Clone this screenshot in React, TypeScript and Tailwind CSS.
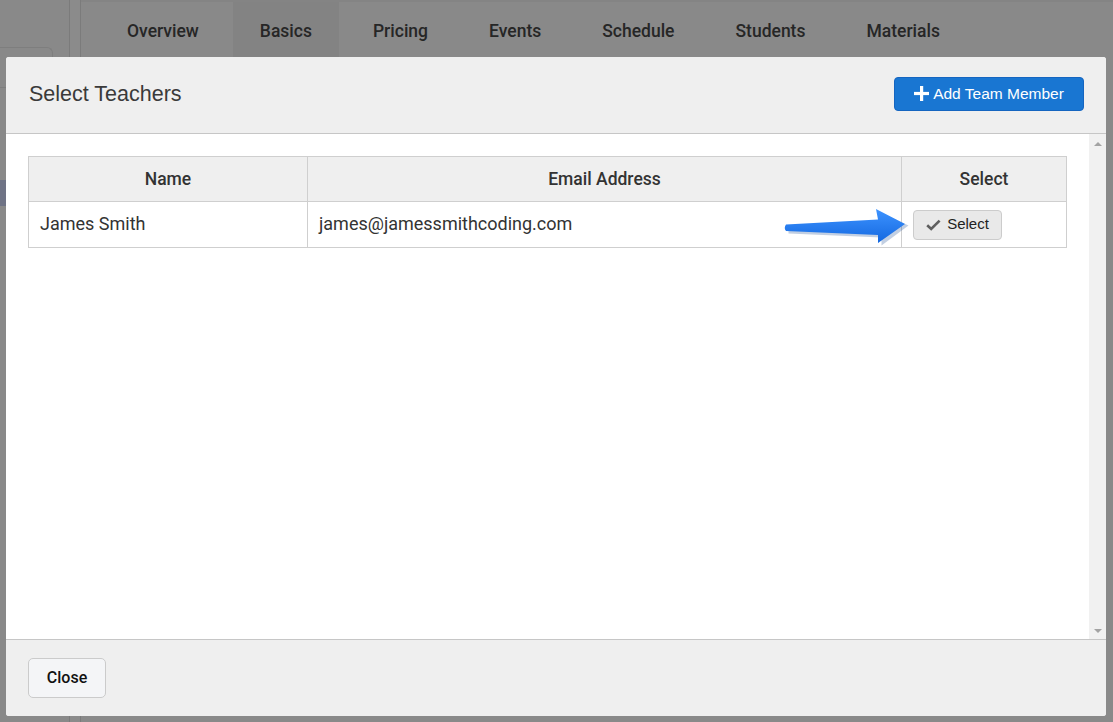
import React from "react";

const tabs = ["Overview", "Basics", "Pricing", "Events", "Schedule", "Students", "Materials"];

function PlusIcon() {
  return (
    <svg width="15" height="15" viewBox="0 0 15 15" className="shrink-0">
      <rect x="6" y="0" width="3.2" height="15" fill="#fff" />
      <rect x="0" y="5.9" width="15" height="3.2" fill="#fff" />
    </svg>
  );
}

function CheckIcon() {
  return (
    <svg width="15" height="12" viewBox="0 0 15 12" className="shrink-0">
      <path d="M1.2 6.2 L5.2 10 L13.6 1.6" fill="none" stroke="#5f5f5f" strokeWidth="2.6" />
    </svg>
  );
}

function Arrow() {
  // hand-drawn style pointer from the screenshot
  return (
    <svg className="pointer-events-none absolute left-[782px] top-[206px]" width="130" height="42" viewBox="0 0 130 42">
      <defs>
        <linearGradient id="ag" x1="0" y1="0" x2="0" y2="1">
          <stop offset="0" stopColor="#3d93ff" />
          <stop offset="1" stopColor="#1468e0" />
        </linearGradient>
      </defs>
      <path d="M5 21 L97 15 L95 4 L125 18 L98 38 L98 30 L5 26 Z" fill="#0c3f8a" opacity="0.25" transform="translate(1.5 1.5)" />
      <path d="M4 18.5 Q1.5 22 4 25 L96 29 L96 37 L123 18 L94 3 L96 13.5 Z" fill="url(#ag)" />
    </svg>
  );
}

export default function App() {
  return (
    <div className="relative h-[722px] w-[1113px] overflow-hidden bg-[#898989] font-['Roboto',sans-serif]">
      {/* page behind the dialog */}
      <div className="flex h-full">
        <div className="relative w-[70px] border-r border-[#7b7b7b]">
          <div className="mt-[47px] h-[40px] w-[53px] rounded-tr-[6px] border-t border-r border-[#7e7e7e]" />
          <div className="h-px w-[6px] bg-[#7e7e7e]" />
          <div className="mt-[92px] h-[26px] w-[6px] bg-[#6f7385]" />
        </div>
        <div className="w-[11px] border-r border-[#7b7b7b] bg-[#8b8b8b]" />
        <div className="flex-1 border-t-2 border-[#848484]">
          <div className="flex gap-[7px] pl-[19px]">
            {tabs.map((t) => (
              <div
                key={t}
                className={`px-[27px] pt-[19px] pb-[18px] text-[17.5px] leading-[20px] font-medium text-[#262626] ${t === "Basics" ? "bg-[#838383]" : ""}`}
              >
                {t}
              </div>
            ))}
          </div>
        </div>
      </div>

      {/* dialog */}
      <div className="absolute left-[6px] top-[57px] flex h-[659px] w-[1100px] flex-col overflow-hidden rounded-[3px] bg-white">
        <div className="flex h-[77px] shrink-0 items-center justify-between border-b border-[#c6c6c6] bg-[#efefef] pb-[2px] pl-[23px] pr-[22px]">
          <h2 className="font-['Liberation_Sans',Arial,sans-serif] text-[21.5px] text-[#3a3a3a]">Select Teachers</h2>
          <button className="flex h-[34px] w-[190px] items-center justify-center gap-[4px] rounded-[4px] border border-[#1565c0] bg-[#1976d2] pb-[1px] font-['Liberation_Sans',Arial,sans-serif] text-[15.5px] text-white">
            <PlusIcon />
            Add Team Member
          </button>
        </div>

        <div className="flex min-h-0 flex-1">
          <div className="flex-1 px-[22px] pt-[22px]">
            <table className="w-full border-collapse text-[#333]">
              <colgroup>
                <col className="w-[279px]" />
                <col className="w-[594px]" />
                <col />
              </colgroup>
              <thead>
                <tr className="h-[45px] bg-[#efefef]">
                  <th className="border border-[#cfcfcf] text-center text-[17.5px] font-medium">Name</th>
                  <th className="border border-[#cfcfcf] text-center text-[17.5px] font-medium">Email Address</th>
                  <th className="border border-[#cfcfcf] text-center text-[17.5px] font-medium">Select</th>
                </tr>
              </thead>
              <tbody>
                <tr className="h-[46px]">
                  <td className="border border-[#cfcfcf] pb-[2px] pl-[11px] text-[18px]">James Smith</td>
                  <td className="border border-[#cfcfcf] pb-[2px] pl-[11px] text-[18px]">james@jamessmithcoding.com</td>
                  <td className="border border-[#cfcfcf] pl-[11px]">
                    <button className="flex h-[30px] w-[89px] items-center justify-center gap-[6px] rounded-[4px] border border-[#cccccc] bg-[#e9e9e9] font-['Liberation_Sans',Arial,sans-serif] text-[15px] text-[#222]">
                      <CheckIcon />
                      Select
                    </button>
                  </td>
                </tr>
              </tbody>
            </table>
          </div>
          <div className="flex w-[17px] flex-col items-center justify-between bg-[#f1f1f1] pt-[8px] pb-[6px]">
            <div className="h-0 w-0 border-x-[4px] border-b-[4px] border-x-transparent border-b-[#a3a3a3]" />
            <div className="h-0 w-0 border-x-[4px] border-t-[4px] border-x-transparent border-t-[#a3a3a3]" />
          </div>
        </div>

        <div className="h-[77px] shrink-0 border-t border-[#c6c6c6] bg-[#efefef] px-[22px] pt-[18px]">
          <button className="h-[40px] w-[78px] rounded-[5px] border border-[#cbcbcb] bg-[#f4f5f7] text-[16px] font-medium text-[#111]">
            Close
          </button>
        </div>
      </div>

      <Arrow />
    </div>
  );
}
